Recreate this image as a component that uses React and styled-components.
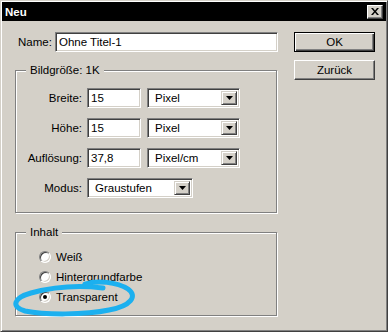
import styled, { createGlobalStyle } from 'styled-components'

const GlobalStyle = createGlobalStyle`
  html, body {
    margin: 0;
    padding: 0;
    background: #d4d0c8;
  }
  body {
    font-family: "Liberation Sans", Arial, sans-serif;
    font-size: 11.5px;
    color: #000;
  }
`

export default function App() {
  return (
    <>
      <GlobalStyle />
      <Window>
        <TitleBar>
          <Title>Neu</Title>
          <CloseButton>
            <svg width="8" height="7" viewBox="0 0 8 7">
              <path d="M0 0h2l2 2.5L6 0h2L5 3.5 8 7H6L4 4.5 2 7H0l3-3.5z" fill="#000" />
            </svg>
          </CloseButton>
        </TitleBar>
        <Body>
          <LeftColumn>
            <NameRow>
              <NameLabel>Name:</NameLabel>
              <TextBox $width={223}>Ohne Titel-1</TextBox>
            </NameRow>

            <Group>
              <Legend>Bildgröße: 1K</Legend>
              <FieldRows>
                <FieldRow>
                  <FieldLabel>Breite:</FieldLabel>
                  <TextBox $width={54}>15</TextBox>
                  <Select width={93} value="Pixel" />
                </FieldRow>
                <FieldRow>
                  <FieldLabel>Höhe:</FieldLabel>
                  <TextBox $width={54}>15</TextBox>
                  <Select width={93} value="Pixel" />
                </FieldRow>
                <FieldRow>
                  <FieldLabel>Auflösung:</FieldLabel>
                  <TextBox $width={54}>37,8</TextBox>
                  <Select width={93} value="Pixel/cm" />
                </FieldRow>
                <FieldRow>
                  <FieldLabel>Modus:</FieldLabel>
                  <Select width={106} value="Graustufen" />
                </FieldRow>
              </FieldRows>
            </Group>

            <Group $gap={12}>
              <Legend>Inhalt</Legend>
              <RadioList>
                <RadioRow>
                  <Radio />
                  Weiß
                </RadioRow>
                <RadioRow>
                  <Radio />
                  Hintergrundfarbe
                </RadioRow>
                <RadioRow>
                  <Radio $checked />
                  Transparent
                </RadioRow>
              </RadioList>
            </Group>
          </LeftColumn>

          <RightColumn>
            <Button $default>OK</Button>
            <Button>Zurück</Button>
          </RightColumn>
        </Body>

        <Scribble width="388" height="332" viewBox="0 0 388 332">
          <path
            d="M84 283 C96 279 116 281 127 288 C137 295 130 305 108 309 C84 314 44 314 24 310 C10 306 12 297 30 292 C52 286 78 284 102 287"
            fill="none"
            stroke="#1cb0ef"
            strokeWidth="5"
            strokeLinecap="round"
            strokeLinejoin="round"
          />
        </Scribble>
      </Window>
    </>
  )
}

function Select({ width, value }) {
  return (
    <SelectBox $width={width}>
      <SelectValue>{value}</SelectValue>
      <ArrowButton>
        <svg width="7" height="4" viewBox="0 0 7 4">
          <path d="M0 0h7L3.5 4z" fill="#000" />
        </svg>
      </ArrowButton>
    </SelectBox>
  )
}

const Window = styled.div`
  position: relative;
  box-sizing: border-box;
  width: 388px;
  height: 332px;
  background: #d4d0c8;
  border: 1px solid;
  border-color: #d4d0c8 #404040 #404040 #d4d0c8;
  box-shadow: inset 1px 1px 0 #fff, inset -1px -1px 0 #808080;
  padding: 1px 1px 2px 1px;
  overflow: hidden;
`

const TitleBar = styled.div`
  display: flex;
  align-items: center;
  justify-content: space-between;
  height: 19px;
  background: #000;
  padding: 0 3px 0 3px;
`

const Title = styled.span`
  color: #fff;
  font-weight: bold;
  font-size: 11.5px;
`

const CloseButton = styled.div`
  box-sizing: border-box;
  width: 16px;
  height: 14px;
  display: flex;
  align-items: center;
  justify-content: center;
  background: #d4d0c8;
  border: 1px solid;
  border-color: #fff #404040 #404040 #fff;
  box-shadow: inset -1px -1px 0 #808080;
`

const Body = styled.div`
  display: grid;
  grid-template-columns: 262px 81px;
  column-gap: 17px;
  padding: 11px 0 0 13px;
`

const LeftColumn = styled.div`
  display: flex;
  flex-direction: column;
`

const RightColumn = styled.div`
  display: flex;
  flex-direction: column;
  gap: 8px;
`

const NameRow = styled.div`
  display: flex;
  align-items: center;
  gap: 3px;
  height: 20px;
  padding-left: 3px;
  width: 263px;
`

const NameLabel = styled.span`
  width: 34px;
`

const TextBox = styled.div`
  box-sizing: border-box;
  width: ${(p) => p.$width}px;
  height: 20px;
  background: #fff;
  border: 1px solid;
  border-color: #808080 #fff #fff #808080;
  box-shadow: inset 1px 1px 0 #404040, inset -1px -1px 0 #d4d0c8;
  padding: 0 3px;
  display: flex;
  align-items: center;
  white-space: nowrap;
`

const Group = styled.fieldset`
  margin: ${(p) => p.$gap ?? 11}px 0 0 0;
  padding: 0;
  min-inline-size: 0;
  border: 1px solid #808080;
  box-shadow: inset 1px 1px 0 #fff, 1px 1px 0 #fff;
  width: 262px;
  box-sizing: border-box;
`

const Legend = styled.legend`
  margin-left: 10px;
  padding: 0 4px;
  line-height: 14px;
  background: #d4d0c8;
`

const FieldRows = styled.div`
  display: flex;
  flex-direction: column;
  gap: 10px;
  padding: 11px 0 14px 0;
`

const FieldRow = styled.div`
  display: flex;
  align-items: center;
  gap: 6px;
  height: 20px;
`

const FieldLabel = styled.span`
  width: 66px;
  margin-right: -1px;
  text-align: right;
`

const SelectBox = styled.div`
  box-sizing: border-box;
  width: ${(p) => p.$width}px;
  height: 20px;
  background: #fff;
  border: 1px solid;
  border-color: #808080 #fff #fff #808080;
  box-shadow: inset 1px 1px 0 #404040, inset -1px -1px 0 #d4d0c8;
  padding: 2px;
  display: flex;
  align-items: stretch;
`

const SelectValue = styled.span`
  flex: 1;
  display: flex;
  align-items: center;
  padding-left: 5px;
`

const ArrowButton = styled.span`
  box-sizing: border-box;
  width: 16px;
  display: flex;
  align-items: center;
  justify-content: center;
  background: #d4d0c8;
  border: 1px solid;
  border-color: #d4d0c8 #404040 #404040 #d4d0c8;
  box-shadow: inset 1px 1px 0 #fff, inset -1px -1px 0 #808080;
`

const RadioList = styled.div`
  display: flex;
  flex-direction: column;
  padding: 8px 0 8px 23px;
`

const RadioRow = styled.div`
  display: flex;
  align-items: center;
  gap: 5px;
  height: 20px;
`

const Radio = styled.span`
  position: relative;
  box-sizing: border-box;
  width: 12px;
  height: 12px;
  border-radius: 50%;
  background: #fff;
  border: 1px solid;
  border-color: #808080 #fff #fff #808080;
  box-shadow: inset 1px 1px 0 #404040, inset -1px -1px 0 #d4d0c8;

  &::after {
    content: '';
    display: ${(p) => (p.$checked ? 'block' : 'none')};
    position: absolute;
    left: 3px;
    top: 3px;
    width: 4px;
    height: 4px;
    border-radius: 50%;
    background: #000;
  }
`

const Button = styled.div`
  box-sizing: border-box;
  height: 20px;
  display: flex;
  align-items: center;
  justify-content: center;
  background: #d4d0c8;
  border: 1px solid;
  border-color: ${(p) => (p.$default ? '#000' : '#fff #404040 #404040 #fff')};
  box-shadow: ${(p) =>
    p.$default
      ? 'inset 1px 1px 0 #fff, inset -1px -1px 0 #404040, inset -2px -2px 0 #808080'
      : 'inset -1px -1px 0 #808080'};
`

const Scribble = styled.svg`
  position: absolute;
  left: 0;
  top: 0;
  pointer-events: none;
`
